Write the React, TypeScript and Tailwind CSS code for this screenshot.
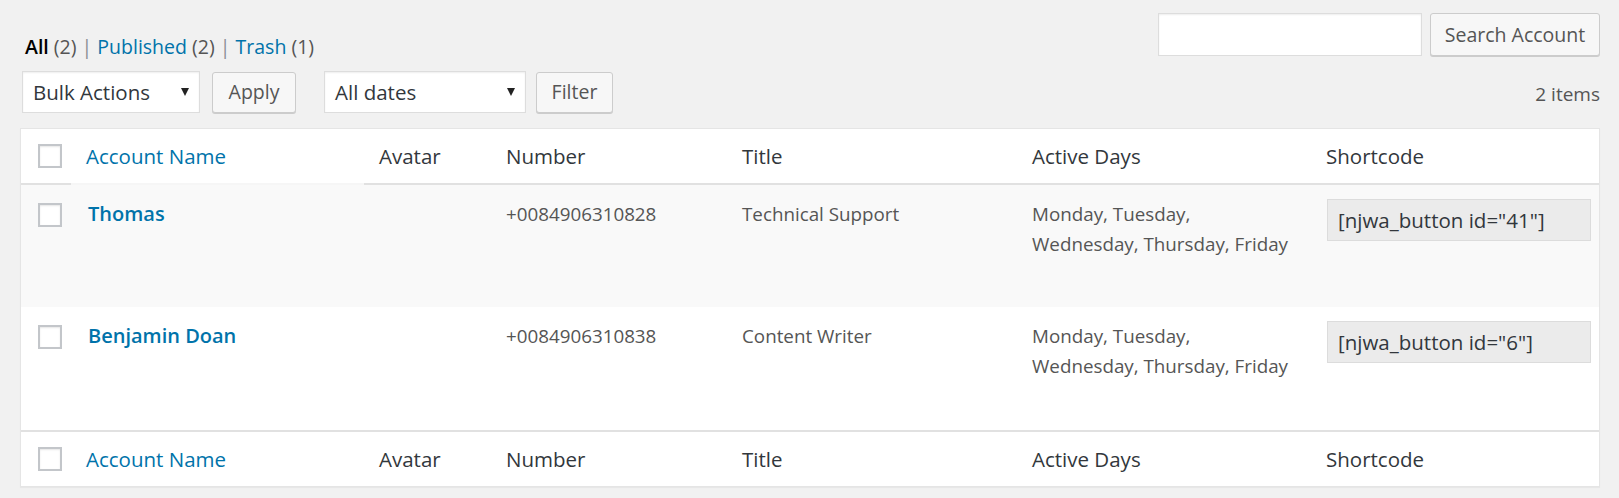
import React from 'react';

const rows = [
  {
    name: 'Thomas',
    number: '+0084906310828',
    title: 'Technical Support',
    days: ['Monday, Tuesday,', 'Wednesday, Thursday, Friday'],
    shortcode: '[njwa_button id="41"]',
  },
  {
    name: 'Benjamin Doan',
    number: '+0084906310838',
    title: 'Content Writer',
    days: ['Monday, Tuesday,', 'Wednesday, Thursday, Friday'],
    shortcode: '[njwa_button id="6"]',
  },
];

const Checkbox = () => (
  <span className="block w-[24px] h-[24px] bg-white border-2 border-[#c3c6ca] shadow-[inset_0_1px_2px_rgba(0,0,0,0.1)]" />
);

const SelectBox = ({ label, width }: { label: string; width: string }) => (
  <div
    className={`${width} h-[42px] flex items-center justify-between bg-white border border-[#dddddd] shadow-[inset_0_1px_2px_rgba(0,0,0,0.07)] pl-[10px] pr-[10px] text-[20.5px] text-[#32373c]`}
  >
    <span>{label}</span>
    <svg width="8" height="8" viewBox="0 0 8 8">
      <polygon points="0,0 8,0 4,8" fill="#222" />
    </svg>
  </div>
);

const Button = ({ label, className }: { label: string; className: string }) => (
  <button
    className={`${className} flex items-center justify-center bg-[#f7f7f7] border border-[#cccccc] rounded-[3px] shadow-[0_1px_0_#cccccc] text-[#555] text-[19.5px]`}
  >
    {label}
  </button>
);

const HeaderRow = ({ top }: { top?: boolean }) => {
  const border = top ? 'border-b-2' : 'border-t-2';
  return (
    <tr className="h-[56px]">
      <th className={`${border} border-[#e1e1e1] pl-[17px] align-middle`}>
        <Checkbox />
      </th>
      <th
        className={`${border} ${top ? 'border-[#f6f6f6]' : 'border-[#e1e1e1]'} px-[15px] text-left font-normal text-[20.5px] text-[#0073aa] align-middle`}
      >
        Account Name
      </th>
      {['Avatar', 'Number', 'Title', 'Active Days', 'Shortcode'].map((h) => (
        <th
          key={h}
          className={`${border} border-[#e1e1e1] px-[15px] text-left font-normal text-[20.5px] text-[#32373c] align-middle`}
        >
          {h}
        </th>
      ))}
    </tr>
  );
};

export default function App() {
  return (
    <div className="min-h-screen bg-[#f1f1f1] pl-[20px] pr-[19px] pt-[13px] font-['Open_Sans',sans-serif] leading-[30px]">
      <div className="flex justify-between items-start h-[43px]">
        <div className="pl-[5px] pt-[20px] text-[19.5px] leading-[28px] text-[#555]">
          <span className="font-semibold text-black">All</span> (2) <span className="text-[#8c8f94]">|</span>{' '}
          <span className="text-[#0073aa]">Published</span> (2) <span className="text-[#8c8f94]">|</span>{' '}
          <span className="text-[#0073aa]">Trash</span> (1)
        </div>
        <div className="flex items-start">
          <div className="w-[264px] h-[43px] bg-white border border-[#dddddd] shadow-[inset_0_1px_2px_rgba(0,0,0,0.07)]" />
          <Button label="Search Account" className="ml-[8px] w-[170px] h-[43px] text-[19.2px]" />
        </div>
      </div>

      <div className="mt-[15px] flex items-center h-[42px]">
        <div className="ml-[2px]">
          <SelectBox label="Bulk Actions" width="w-[178px]" />
        </div>
        <Button label="Apply" className="ml-[12px] w-[84px] h-[41px]" />
        <div className="ml-[28px]">
          <SelectBox label="All dates" width="w-[202px]" />
        </div>
        <Button label="Filter" className="ml-[10px] w-[77px] h-[41px]" />
        <div className="ml-auto pt-[4px] text-[19px] text-[#555]">2 items</div>
      </div>

      <div className="mt-[15px] bg-white border border-[#e5e5e5] shadow-[0_1px_1px_rgba(0,0,0,0.04)]">
        <table className="w-full table-fixed border-separate border-spacing-0">
          <colgroup>
            <col className="w-[50px]" />
            <col className="w-[293px]" />
            <col className="w-[127px]" />
            <col className="w-[236px]" />
            <col className="w-[290px]" />
            <col className="w-[294px]" />
            <col />
          </colgroup>
          <thead>
            <HeaderRow top />
          </thead>
          <tbody>
            {rows.map((r, i) => (
              <tr key={r.name} className={i === 0 ? 'bg-[#f9f9f9] h-[122px]' : 'bg-white h-[123px]'}>
                <td className="pl-[17px] pt-[18px] align-top">
                  <Checkbox />
                </td>
                <td className="pl-[17px] pr-[15px] pt-[14px] align-top text-[20px] font-semibold text-[#0073aa]">
                  {r.name}
                </td>
                <td className="px-[15px] pt-[13px] align-top" />
                <td className="px-[15px] pt-[14px] align-top text-[18.8px] text-[#555]">{r.number}</td>
                <td className="px-[15px] pt-[14px] align-top text-[18.8px] text-[#555]">{r.title}</td>
                <td className="px-[15px] pt-[14px] align-top text-[18.8px] text-[#555] whitespace-nowrap">
                  {r.days.map((d) => (
                    <div key={d}>{d}</div>
                  ))}
                </td>
                <td className="pl-[16px] pt-[14px] align-top">
                  <div className="w-[264px] h-[42px] flex items-center pl-[10px] bg-[#ebebeb] border border-[#dcdcdc] text-[20.5px] text-[#32373c] whitespace-nowrap">
                    {r.shortcode}
                  </div>
                </td>
              </tr>
            ))}
          </tbody>
          <tfoot>
            <HeaderRow />
          </tfoot>
        </table>
      </div>
    </div>
  );
}
